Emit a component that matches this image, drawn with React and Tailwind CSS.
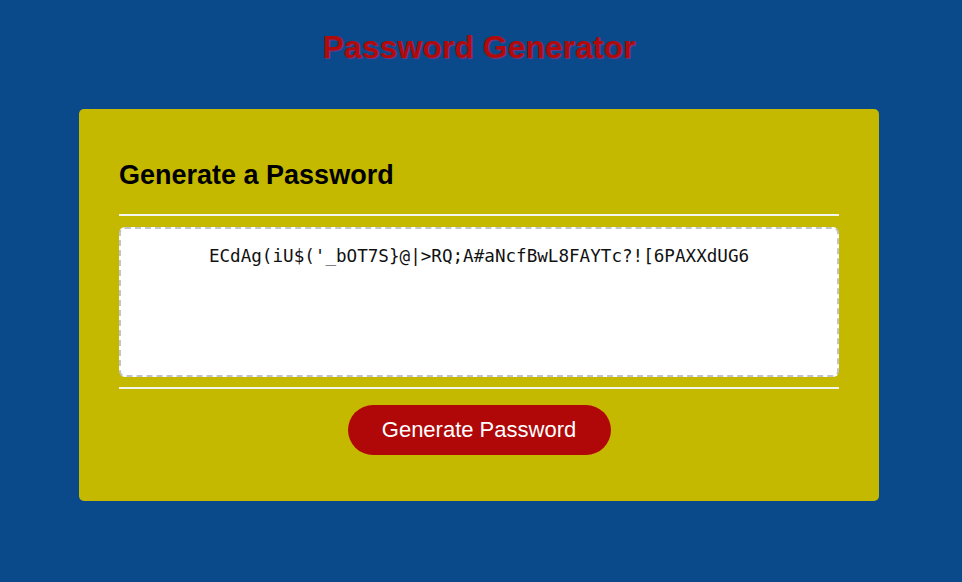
export default function App() {
  const password = "ECdAg(iU$('_bOT7S}@|>RQ;A#aNcfBwL8FAYTc?![6PAXXdUG6";
  return (
    <div className="min-h-[582px] bg-[#0a4a8a] font-['Liberation_Sans',Arial,sans-serif] pt-[28px]">
      <div className="w-[958px]">
        <h1 className="text-center text-[32px] leading-[38px] font-bold text-[#b00a0a] [text-shadow:1px_1px_1px_#6a3a8a]">
          Password Generator
        </h1>
        <div className="mx-auto mt-[43px] w-[800px] h-[392px] rounded-[5px] bg-[#c5b900] px-[40px] pt-[50px]">
          <h2 className="text-[27px] leading-[32px] font-bold text-black">Generate a Password</h2>
          <div className="mt-[23px] h-[2px] bg-[#f5f5f0]" />
          <div className="mt-[11px] h-[150px] rounded-[6px] border-2 border-dashed border-[#c0c4cc] bg-white pt-[14px] text-center">
            <span className="font-['DejaVu_Sans_Mono',monospace] text-[17.6px] text-[#111]">{password}</span>
          </div>
          <div className="mt-[10px] h-[2px] bg-[#f5f5f0]" />
          <div className="mt-[16px] flex justify-center">
            <button className="w-[263px] h-[50px] rounded-full bg-[#b00808] text-white text-[22px] leading-none">
              Generate Password
            </button>
          </div>
        </div>
      </div>
    </div>
  );
}
